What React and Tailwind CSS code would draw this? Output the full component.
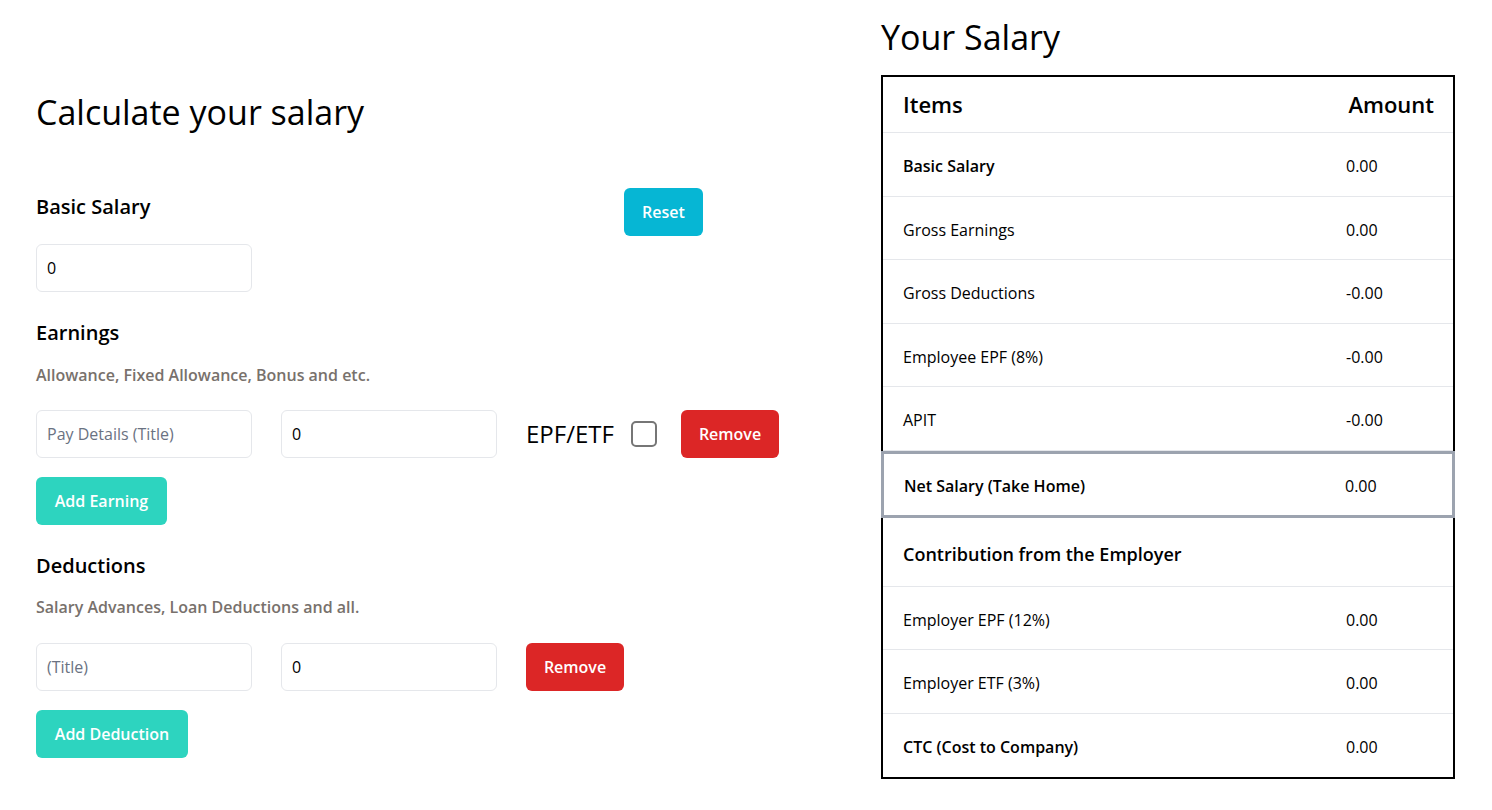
import { useState } from "react";

const rows = [
  { label: "Basic Salary", amount: "0.00", bold: true },
  { label: "Gross Earnings", amount: "0.00" },
  { label: "Gross Deductions", amount: "-0.00" },
  { label: "Employee EPF (8%)", amount: "-0.00" },
  { label: "APIT", amount: "-0.00" },
];

const employerRows = [
  { label: "Employer EPF (12%)", amount: "0.00" },
  { label: "Employer ETF (3%)", amount: "0.00" },
  { label: "CTC (Cost to Company)", amount: "0.00", bold: true },
];

const inputCls =
  "w-[216px] h-12 px-[10px] border border-gray-200 rounded-md text-base text-black placeholder:text-gray-500 outline-none";

const SalaryRow = ({ label, amount, bold, last }) => (
  <div className={`flex items-center h-[63.5px] ${last ? "" : "border-b border-gray-200"}`}>
    <div className={`flex-1 pl-5 pt-1 text-base ${bold ? "font-semibold" : ""}`}>{label}</div>
    <div className="w-[127px] pl-5 pt-1 text-base">{amount}</div>
  </div>
);

const App = () => {
  const [basic, setBasic] = useState("0");

  return (
    <div className="min-h-screen bg-white text-black font-['Open_Sans',sans-serif] flex">
      <div className="w-[845px] pl-9 pt-[92px]">
        <h1 className="text-[34px] leading-10">Calculate your salary</h1>

        <div className="mt-14 w-[667px] flex justify-between items-start">
          <h2 className="text-xl leading-7 font-semibold pt-[5px]">Basic Salary</h2>
          <button className="w-[79px] h-12 rounded-md bg-[#06b6d4] text-white font-semibold text-base">
            Reset
          </button>
        </div>
        <input
          className={`${inputCls} mt-2`}
          value={basic}
          onChange={(e) => setBasic(e.target.value)}
        />

        <h2 className="mt-[27px] text-xl leading-7 font-semibold">Earnings</h2>
        <p className="mt-4 text-base leading-6 font-semibold text-[#78716c]">
          Allowance, Fixed Allowance, Bonus and etc.
        </p>
        <div className="mt-[23px] flex items-center">
          <input className={inputCls} placeholder="Pay Details (Title)" />
          <input className={`${inputCls} ml-[29px]`} defaultValue="0" />
          <span className="ml-[29px] w-[91px] text-2xl whitespace-nowrap">EPF/ETF</span>
          <span className="ml-[14px] w-[26px] h-[26px] rounded-[5px] border-2 border-[#767676]" />
          <button className="ml-6 w-[98px] h-12 rounded-md bg-[#dc2626] text-white font-semibold text-base">
            Remove
          </button>
        </div>
        <button className="mt-[19px] w-[131px] h-12 rounded-md bg-[#2dd4bf] text-white font-semibold text-base">
          Add Earning
        </button>

        <h2 className="mt-[27px] text-xl leading-7 font-semibold">Deductions</h2>
        <p className="mt-[15px] text-base leading-6 font-semibold text-[#78716c]">
          Salary Advances, Loan Deductions and all.
        </p>
        <div className="mt-[24px] flex items-center">
          <input className={inputCls} placeholder="(Title)" />
          <input className={`${inputCls} ml-[29px]`} defaultValue="0" />
          <button className="ml-[29px] w-[98px] h-12 rounded-md bg-[#dc2626] text-white font-semibold text-base">
            Remove
          </button>
        </div>
        <button className="mt-[19px] w-[152px] h-12 rounded-md bg-[#2dd4bf] text-white font-semibold text-base">
          Add Deduction
        </button>
      </div>

      <div className="w-[574px] ml-9 pt-[17px]">
        <h1 className="text-[34px] leading-10">Your Salary</h1>
        <div className="mt-[18px] border-2 border-black">
          <div className="flex items-center h-14 border-b border-gray-200">
            <div className="flex-1 pl-5 text-[22px] font-semibold">Items</div>
            <div className="pr-[19px] text-[22px] font-semibold">Amount</div>
          </div>
          {rows.map((r) => (
            <SalaryRow key={r.label} {...r} />
          ))}
          <div className="-mx-[2px] flex items-center h-[67px] border-[3px] border-[#9ca3af]">
            <div className="flex-1 pl-[20px] pt-1 text-base font-semibold">Net Salary (Take Home)</div>
            <div className="w-[127px] pl-5 pt-1 text-base">0.00</div>
          </div>
          <div className="flex items-center h-[69px] border-b border-gray-200">
            <div className="pl-5 pt-1 text-lg font-semibold">Contribution from the Employer</div>
          </div>
          {employerRows.map((r, i) => (
            <SalaryRow key={r.label} {...r} last={i === employerRows.length - 1} />
          ))}
        </div>
      </div>
    </div>
  );
};

export default App;
